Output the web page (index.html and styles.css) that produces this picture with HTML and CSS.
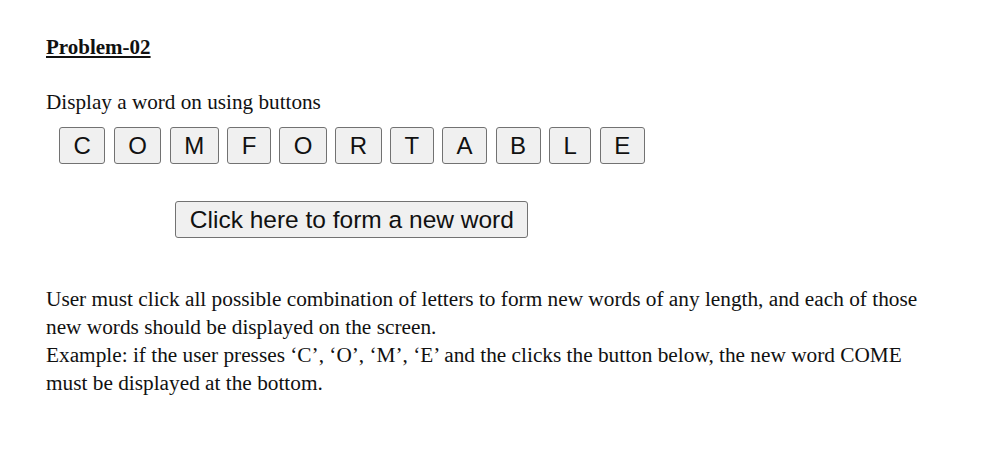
FILE: index.html
```html
<!DOCTYPE html>
<html>
<head>
<meta charset="utf-8">
<link rel="stylesheet" href="styles.css">
</head>
<body>
<main class="page">
  <h3 class="title">Problem-02</h3>
  <p class="intro">Display a word on using buttons</p>
  <div class="board">
    <div class="letters">
      <button class="key">C</button>
      <button class="key">O</button>
      <button class="key">M</button>
      <button class="key">F</button>
      <button class="key">O</button>
      <button class="key">R</button>
      <button class="key">T</button>
      <button class="key">A</button>
      <button class="key">B</button>
      <button class="key">L</button>
      <button class="key">E</button>
    </div>
    <button class="key form-btn">Click here to form a new word</button>
  </div>
  <p class="desc">User must click all possible combination of letters to form new words of any length, and each of those new words should be displayed on the screen.<br>Example: if the user presses ‘C’, ‘O’, ‘M’, ‘E’ and the clicks the button below, the new word COME must be displayed at the bottom.</p>
</main>
</body>
</html>
```

FILE: styles.css
```css
html, body {
  margin: 0;
  padding: 0;
  background: #ffffff;
}

.page {
  padding: 35px 60px 0 46px;
  font-family: "Liberation Serif", "Times New Roman", serif;
  font-size: 21px;
  color: #111;
}

.title {
  margin: 0;
  font-size: 21px;
  font-weight: bold;
  text-decoration: underline;
  line-height: 24px;
}

.intro {
  margin: 31px 0 0;
  font-size: 21.2px;
  line-height: 24px;
}

.board {
  display: inline-flex;
  flex-direction: column;
  align-items: center;
  gap: 37px;
  margin: 13px 0 0 13px;
}

.letters {
  display: flex;
  gap: 8.4px;
}

.key {
  font-family: "Liberation Sans", Arial, sans-serif;
  font-size: 24px;
  line-height: 28px;
  color: #111;
  background: #f0f0f0;
  border: 1.5px solid #727272;
  border-radius: 3px;
  padding: 3.5px 13.5px;
  margin: 0;
}

.form-btn {
  font-size: 24.5px;
}

.desc {
  margin: 47px 0 0;
  font-size: 21.3px;
  line-height: 28px;
  max-width: 890px;
}
```
